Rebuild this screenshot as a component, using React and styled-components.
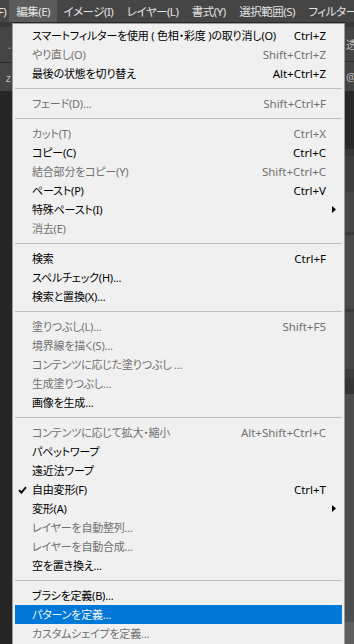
import React from "react";
import styled, { createGlobalStyle } from "styled-components";

const GlobalStyle = createGlobalStyle`
  html, body {
    margin: 0;
    padding: 0;
    background: #262626;
  }
  body {
    overflow: hidden;
  }
`;

const FONT = `"Noto Sans", "Noto Sans CJK JP", sans-serif`;

const topMenus = [
  { label: "ファイル(F)" },
  { label: "編集(E)", open: true },
  { label: "イメージ(I)" },
  { label: "レイヤー(L)" },
  { label: "書式(Y)" },
  { label: "選択範囲(S)" },
  { label: "フィルター(T)" },
];

const items = [
  { label: "スマートフィルターを使用 ( 色相・彩度 )の取り消し(O)", keys: "Ctrl+Z" },
  { label: "やり直し(O)", keys: "Shift+Ctrl+Z", disabled: true },
  { label: "最後の状態を切り替え", keys: "Alt+Ctrl+Z" },
  "sep",
  { label: "フェード(D)...", keys: "Shift+Ctrl+F", disabled: true },
  "sep",
  { label: "カット(T)", keys: "Ctrl+X", disabled: true },
  { label: "コピー(C)", keys: "Ctrl+C" },
  { label: "結合部分をコピー(Y)", keys: "Shift+Ctrl+C", disabled: true },
  { label: "ペースト(P)", keys: "Ctrl+V" },
  { label: "特殊ペースト(I)", sub: true },
  { label: "消去(E)", disabled: true },
  "sep",
  { label: "検索", keys: "Ctrl+F" },
  { label: "スペルチェック(H)..." },
  { label: "検索と置換(X)..." },
  "sep",
  { label: "塗りつぶし(L)...", keys: "Shift+F5", disabled: true },
  { label: "境界線を描く(S)...", disabled: true },
  { label: "コンテンツに応じた塗りつぶし ...", disabled: true },
  { label: "生成塗りつぶし...", disabled: true },
  { label: "画像を生成..." },
  "sep",
  { label: "コンテンツに応じて拡大・縮小", keys: "Alt+Shift+Ctrl+C", disabled: true },
  { label: "パペットワープ" },
  { label: "遠近法ワープ" },
  { label: "自由変形(F)", keys: "Ctrl+T", checked: true },
  { label: "変形(A)", sub: true },
  { label: "レイヤーを自動整列...", disabled: true },
  { label: "レイヤーを自動合成...", disabled: true },
  { label: "空を置き換え..." },
  "sep",
  { label: "ブラシを定義(B)..." },
  { label: "パターンを定義...", active: true },
  { label: "カスタムシェイプを定義...", disabled: true },
];

// background panels peeking out on either side of the open menu
const leftBands = [
  { h: 5, c: "#383838" },
  { h: 35, c: "#454545", t: "." },
  { h: 1, c: "#2c2c2c" },
  { h: 28, c: "#454545", t: "z" },
];

const rightBands = [
  { h: 5, c: "#383838" },
  { h: 34, c: "#444444", t: "透明" },
  { h: 1, c: "#2e2e2e" },
  { h: 29, c: "#444444", t: "@" },
  { h: 58, c: "#282828" },
  { h: 7, c: "#363636" },
  { h: 36, c: "#3e3e3e" },
  { h: 40, c: "#474747" },
  { h: 3, c: "#3a3a3a" },
  { h: 74, c: "#4a4a4a" },
  { h: 3, c: "#3c3c3c" },
  { h: 57, c: "#474747" },
  { h: 10, c: "#3c3c3c" },
  { h: 15, c: "#353535" },
  { h: 228, c: "#4d4d4d" },
  { h: 30, c: "#5e5e5e" },
];

const App = () => {
  return (
    <Screen>
      <GlobalStyle />
      <MenuBar>
        {topMenus.map((m) => (
          <BarItem key={m.label} $open={m.open}>
            {m.label}
          </BarItem>
        ))}
      </MenuBar>
      <Workspace>
        <SideStrip $w={12}>
          {leftBands.map((b, i) => (
            <Band key={i} $h={b.h} $c={b.c} $align="flex-end">
              {b.t}
            </Band>
          ))}
        </SideStrip>
        <Menu>
          {items.map((it, i) =>
            it === "sep" ? (
              <Separator key={i} />
            ) : (
              <Row key={i} $disabled={it.disabled} $active={it.active}>
                <Lead>
                  {it.checked && (
                    <svg width="9" height="8" viewBox="0 0 9 8">
                      <path
                        d="M1 4.2 L3.4 6.6 L8 1.2"
                        fill="none"
                        stroke="#000"
                        strokeWidth="1.8"
                      />
                    </svg>
                  )}
                </Lead>
                <Label>{it.label}</Label>
                <Keys>{it.keys}</Keys>
                <Trail>
                  {it.sub && (
                    <svg width="4" height="7" viewBox="0 0 4 7">
                      <polygon points="0,0 4,3.5 0,7" fill="#000" />
                    </svg>
                  )}
                </Trail>
              </Row>
            )
          )}
        </Menu>
        <SideStrip $w={9} $shadow>
          {rightBands.map((b, i) => (
            <Band key={i} $h={b.h} $c={b.c}>
              {b.t}
            </Band>
          ))}
        </SideStrip>
      </Workspace>
    </Screen>
  );
};

const Screen = styled.div`
  width: 100vw;
  height: 100vh;
  overflow: hidden;
  display: flex;
  flex-direction: column;
  background: #262626;
  font-family: ${FONT};
  font-feature-settings: "palt" 1;
`;

const MenuBar = styled.nav`
  height: 22px;
  flex: none;
  display: flex;
  align-items: stretch;
  background: #454545;
  white-space: nowrap;
  overflow: hidden;
`;

const BarItem = styled.div`
  display: flex;
  align-items: center;
  padding: 0 6.5px 0 7px;
  font-size: 11.5px;
  letter-spacing: -0.5px;
  color: #e2e2e2;
  background: ${(p) => (p.$open ? "#5b5b5b" : "transparent")};
  &:first-child {
    margin-left: -50px;
    padding-right: 3px;
  }
`;

const Workspace = styled.div`
  flex: 1;
  min-height: 0;
  display: flex;
  align-items: flex-start;
  overflow: hidden;
`;

const SideStrip = styled.div`
  width: ${(p) => p.$w}px;
  flex: none;
  align-self: stretch;
  display: flex;
  flex-direction: column;
  overflow: hidden;
  box-shadow: ${(p) => (p.$shadow ? "inset 2px 0 2px rgba(0, 0, 0, 0.35)" : "none")};
`;

const Band = styled.div`
  height: ${(p) => p.$h}px;
  flex: none;
  background: ${(p) => p.$c};
  display: flex;
  align-items: center;
  justify-content: ${(p) => p.$align || "flex-start"};
  padding: 0 1px;
  font-size: 11px;
  color: #bdbdbd;
  white-space: nowrap;
  overflow: hidden;
`;

const Menu = styled.div`
  width: 333px;
  flex: none;
  box-sizing: border-box;
  margin-top: 1px;
  padding: 2px 2px 40px;
  background: #f0f0f0;
  border: 1px solid #9c9c9c;
  position: relative;
  z-index: 1;
`;

const Row = styled.div`
  height: 19px;
  display: grid;
  grid-template-columns: 17px 1fr auto 16px;
  align-items: center;
  font-size: 11px;
  letter-spacing: -0.2px;
  line-height: 19px;
  white-space: nowrap;
  color: ${(p) => (p.$active ? "#f4f4f4" : p.$disabled ? "#717171" : "#000")};
  background: ${(p) => (p.$active ? "#0078d7" : "transparent")};
`;

const Lead = styled.span`
  display: flex;
  align-items: center;
  padding-left: 3px;
`;

const Label = styled.span`
  overflow: hidden;
`;

const Keys = styled.span`
  text-align: right;
  padding-left: 10px;
  font-size: 11.5px;
  letter-spacing: 0;
`;

const Trail = styled.span`
  display: flex;
  align-items: center;
  padding-left: 6px;
`;

const Separator = styled.div`
  height: 11px;
  display: flex;
  align-items: center;
  &::after {
    content: "";
    flex: 1;
    height: 1px;
    background: #bdbdbd;
  }
`;

export default App;
